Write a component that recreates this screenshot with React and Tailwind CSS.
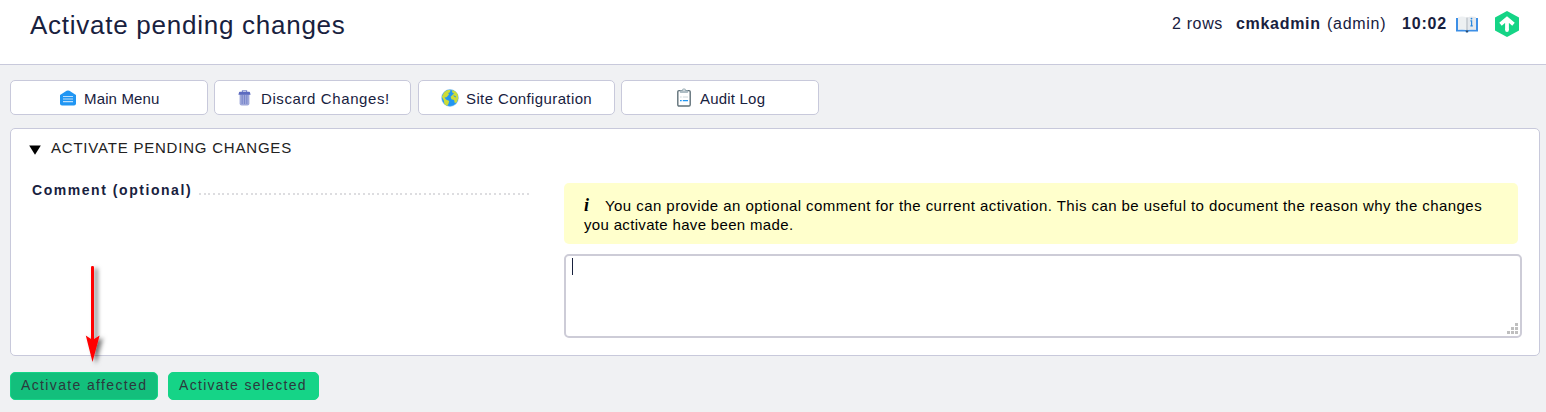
import React from 'react';

const MenuIcon = () => (
  <svg width="16" height="16" viewBox="0 0 16 16">
    <path d="M0 5 L6.6 .8 Q8 0 9.4 .8 L16 5 V13.5 Q16 15.5 14 15.5 H2 Q0 15.5 0 13.5Z" fill="#2196f3" />
    <path d="M3 6.5H13M3 9H13M3 11.7H13" stroke="#bbdefb" strokeWidth="1.2" />
  </svg>
);

const TrashIcon = () => (
  <svg width="13" height="16" viewBox="0 0 13 16">
    <path d="M1.6 4H11.4V13.6Q11.4 15.6 9.4 15.6H3.6Q1.6 15.6 1.6 13.6Z" fill="#9fa8da" />
    <path d="M4.2 5V14M6.5 5V14M8.8 5V14" stroke="#7986cb" strokeWidth="1" />
    <path d="M4.4 2V.8H8.6V2" fill="none" stroke="#7986cb" strokeWidth="1.1" />
    <path d="M1 2.4Q1 1.8 1.8 1.8H11.2Q12 1.8 12 2.4L12.6 4.8H.4Z" fill="#5c6bc0" />
  </svg>
);

const GlobeIcon = () => (
  <svg width="18" height="18" viewBox="0 0 18 18">
    <circle cx="9" cy="9" r="8.4" fill="#2196f3" stroke="#8cc5f5" strokeWidth=".5" />
    <path d="M.8 7.8 3.2 3.2 6.2 1.2 9.4.8 9 3.2 7.2 4 8 5.5 5.5 8.2 3.5 8.4 5 10.5 8.3 12 7.4 15 6 17 3.4 15 2.8 11.5Z" fill="#cddc39" />
    <path d="M11.2 1 14.5 2.4 16.8 5.2 17.2 9.5 15.8 13.2 13.8 14.3 13.1 11 10.4 10.2 9.6 7.8 11.6 5.7 13 4.4 11.2 3.5Z" fill="#cddc39" />
    <path d="M12.7 6.8 15 8" stroke="#2196f3" strokeWidth="1" />
  </svg>
);

const ClipboardIcon = () => (
  <svg width="14" height="19" viewBox="0 0 14 19" className="mb-px">
    <rect x=".8" y="2.6" width="12.4" height="15.4" rx="1.2" fill="#fff" stroke="#607179" strokeWidth="1.4" />
    <path d="M3.3 4.5V2.5H5.2Q5.3.7 7 .7T8.8 2.5H10.7V4.5Z" fill="#b0bec5" stroke="#90a4ae" strokeWidth=".6" />
    <circle cx="7" cy="2.1" r=".7" fill="#fff" />
    <path d="M3 9H4.7M5.8 9H11" stroke="#cfd8dc" strokeWidth="1" />
    <path d="M3 12.6H4.7M5.8 12.6H11" stroke="#2196f3" strokeWidth="1.2" />
  </svg>
);

const BookIcon = () => (
  <svg width="22" height="17" viewBox="0 0 22 17">
    <path d="M0 2H2V13.5H20V2H22V15.5H12.6L12 16.6H10L9.4 15.5H0Z" fill="#3d8fe6" />
    <path d="M2 1Q7-.1 10.8 1.5V14.2Q7 12.8 2 13.8Z" fill="#edf0f2" />
    <path d="M20 1Q15-.1 11.2 1.5V14.2Q15 12.8 20 13.8Z" fill="#e5e9ed" />
    <path d="M11 1.5V14" stroke="#b5bdc4" strokeWidth="1.2" />
    <path d="M9.6 14.4H12.4L11.7 16.3H10.3Z" fill="#34495e" />
    <path d="M14.4 4.9H15.6V9.8M14.4 9.8H16.8" fill="none" stroke="#2988de" strokeWidth="1.2" />
    <circle cx="15.5" cy="2.6" r=".9" fill="#2988de" />
  </svg>
);

const Logo = () => (
  <svg width="26" height="28" viewBox="0 0 26 28">
    <path d="M13 1 25 7.6V20.4L13 27 1 20.4V7.6Z" fill="#15d486" />
    <path d="M13 20V9M6.5 14.3 13 8.7 19.5 14.3" fill="none" stroke="#fff" strokeWidth="3.8" />
    <circle cx="13" cy="20" r="1.9" fill="#fff" />
  </svg>
);

const tabs = [
  { label: 'Main Menu', Icon: MenuIcon, box: 'w-[198px] pl-[49px]', text: 'ml-[8px] tracking-[0.15px]' },
  { label: 'Discard Changes!', Icon: TrashIcon, box: 'w-[197px] ml-[6px] pl-[23px]', text: 'ml-[10px] tracking-[0.6px]' },
  { label: 'Site Configuration', Icon: GlobeIcon, box: 'w-[197px] ml-[7px] pl-[22px]', text: 'ml-[7px] tracking-[0.38px]' },
  { label: 'Audit Log', Icon: ClipboardIcon, box: 'w-[198px] ml-[6px] pl-[55px]', text: 'ml-[9px] tracking-[0.2px]' },
];

const gripDots = [[8, 0], [4, 4], [8, 4], [0, 8], [4, 8], [8, 8]];

export default function App() {
  return (
    <div className="h-[412px] w-[1546px] overflow-hidden whitespace-nowrap bg-[#f0f1f3] font-['Liberation_Sans',Arial,sans-serif] text-[#18213e]">
      <header className="flex h-[65px] justify-between border-b border-[#c8c9db] bg-white pl-[30px] pr-[26.5px]">
        <h1 className="mt-[9px] text-[26px] leading-[32px] tracking-[0.74px]">Activate pending changes</h1>
        <div className="mt-[10px] flex h-[28px] items-center text-[16px] leading-[20px]">
          <span className="w-[64px] tracking-[0.65px]">2 rows</span>
          <b className="w-[91px] tracking-[0.7px]">cmkadmin</b>
          <span className="w-[75px] tracking-[0.72px]">(admin)</span>
          <b className="w-[54px] tracking-[0.8px]">10:02</b>
          <BookIcon />
          <span className="ml-[15.5px]"><Logo /></span>
        </div>
      </header>

      <nav className="mt-[15px] flex pl-[10px]">
        {tabs.map(({ label, Icon, box, text }) => (
          <button key={label} className={'flex h-[35px] items-center rounded-[5px] border border-[#c8c9db] bg-white pt-px text-[15px] leading-[20px] ' + box}>
            <Icon />
            <span className={'pt-[2px] ' + text}>{label}</span>
          </button>
        ))}
      </nav>

      <section className="ml-[10px] mt-[13px] h-[228px] w-[1530px] rounded-[5px] border border-[#c8c9db] bg-white">
        <div className="flex h-[38px] items-center pl-[18px] text-[#222]">
          <svg width="12" height="10" viewBox="0 0 12 10" className="mt-[3px]">
            <path d="M.2.5H11.8L6 9.8Z" fill="#000" />
          </svg>
          <h2 className="ml-[10px] text-[15px] leading-[20px] tracking-[0.79px]">ACTIVATE PENDING CHANGES</h2>
        </div>
        <div className="flex pl-[21px] pt-[16px]">
          <div className="flex h-[16px] w-[532px]">
            <b className="w-[167px] text-[14px] leading-[15px] tracking-[1.55px]">Comment (optional)</b>
            <svg width="331" height="2" className="mt-[10px]" shapeRendering="crispEdges">
              <path d="M0 1H330.5" stroke="#dddde0" strokeWidth="2" strokeDasharray="2 2.685" />
            </svg>
          </div>
          <div>
            <div className="h-[61px] w-[954px] rounded-[5px] bg-[#ffffcc] pl-[20px] pt-[13px] text-[15px] leading-[19px] text-black">
              <div className="flex h-[18px]">
                <span className="w-[21px] font-['Liberation_Serif',serif] text-[18px] font-bold italic">i</span>
                <span className="tracking-[0.44px]">You can provide an optional comment for the current activation. This can be useful to document the reason why the changes</span>
              </div>
              <div className="pt-px tracking-[0.33px]">you activate have been made.</div>
            </div>
            <div className="mt-[10px] flex h-[84px] w-[958px] items-end justify-between rounded-[5px] border-2 border-[#cdccd7] bg-white pb-[2px] pl-[6px] pr-[2px]">
              <span className="mb-[59px] h-[17px] w-px bg-[#18213e]" />
              <svg width="11" height="11">
                {gripDots.map(([x, y]) => <rect key={x + '-' + y} x={x} y={y} width="3" height="3" fill="#bfbfbf" />)}
              </svg>
            </div>
          </div>
        </div>
      </section>

      <div className="mt-[16px] flex gap-[10px] pl-[10px] text-[14px] text-[#2c393d]">
        <button className="h-[28px] w-[148px] rounded-[5px] border border-[#15d487] bg-[#13bf7c] pb-[2px] pl-[10px] text-left tracking-[1.36px]">Activate affected</button>
        <button className="h-[28px] w-[151px] rounded-[5px] border border-[#15d487] bg-[#15d487] pb-[2px] pl-[10px] text-left tracking-[1.3px]">Activate selected</button>
      </div>

      <svg width="30" height="106" viewBox="0 0 30 106" className="absolute left-[82px] top-[263px]">
        <defs>
          <filter id="shadow" x="-50%" y="-10%" width="220%" height="125%">
            <feDropShadow dx="3.5" dy="2" stdDeviation="2" floodColor="#000" floodOpacity=".55" />
          </filter>
        </defs>
        <g filter="url(#shadow)" fill="#f00">
          <rect x="9" y="3" width="3" height="78" rx="1.3" />
          <path d="M3.8 72.5 10.5 77 17.6 72.5 10.5 99Z" />
        </g>
      </svg>
    </div>
  );
}
